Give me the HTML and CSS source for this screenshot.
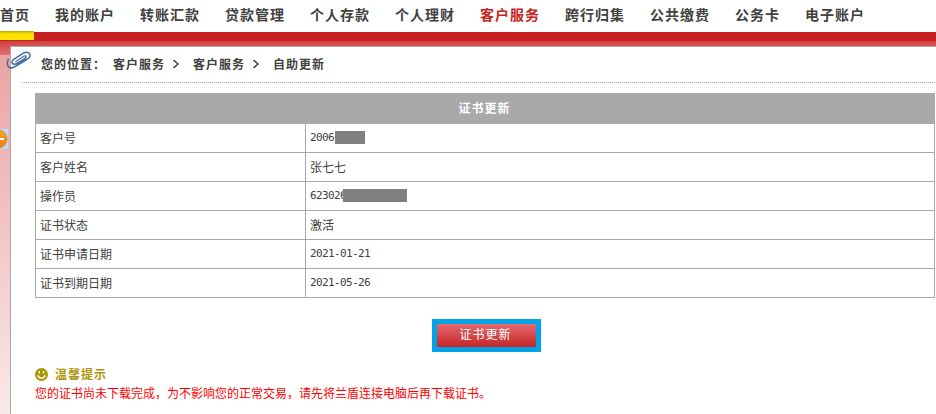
FILE: index.html
```html
<!DOCTYPE html>
<html lang="zh-CN">
<head>
<meta charset="utf-8">
<title>证书更新</title>
<link rel="stylesheet" href="styles.css">
</head>
<body>
<div class="page">
  <nav class="nav">
    <a>首页</a><a>我的账户</a><a>转账汇款</a><a>贷款管理</a><a>个人存款</a><a>个人理财</a><a class="active">客户服务</a><a>跨行归集</a><a>公共缴费</a><a>公务卡</a><a>电子账户</a>
  </nav>
  <div class="band"><div class="marker"></div></div>
  <div class="body">
    <div class="glow"></div>
    <svg class="toggle" width="8" height="20" viewBox="0 0 8 20">
      <defs><linearGradient id="orange" x1="0" y1="0" x2="0" y2="1"><stop offset="0" stop-color="#ffa428"/><stop offset="1" stop-color="#ee7d0c"/></linearGradient></defs>
      <rect width="8" height="20" fill="#b9dcf2"/>
      <circle cx="-2" cy="10" r="9" fill="url(#orange)" stroke="#c88c46"/>
      <rect y="9" width="4" height="2" fill="#fff"/>
    </svg>
    <svg class="clip" width="26" height="20" viewBox="0 0 26 20" fill="none" stroke="#3f6c9f" stroke-width="1.5" stroke-linecap="round" stroke-linejoin="round">
      <path d="M2.300 8.500C.8 11 1 15.200 3.200 16.300C5 17.300 7.200 16.800 9 15.700L21.500 8C24.500 6 24.600 3.500 23.200 2.200C21.600.9 19 1.200 17 2.400L8.500 7.800C6.200 9.300 5.400 11.200 6.500 12.500C7.600 13.800 9.800 13.300 11.800 12L19.200 7.300"/>
      <path d="M9.800 10.500L18.300 5.100C20 4.100 21.200 5.700 19.200 7.300" stroke-width="1.200"/>
    </svg>
    <main class="panel">
      <div class="crumbs">
        <span class="label">您的位置：</span><span>客户服务</span><svg width="8" height="10" viewBox="0 0 8 10"><path d="M1.500 1L6 5L1.500 9"/></svg><span>客户服务</span><svg width="8" height="10" viewBox="0 0 8 10"><path d="M1.500 1L6 5L1.500 9"/></svg><span>自助更新</span>
      </div>
      <table class="info">
        <colgroup><col class="names"><col></colgroup>
        <thead><tr><th colspan="2">证书更新</th></tr></thead>
        <tbody>
          <tr><td>客户号</td><td><div class="value num">2006<i class="mask short"></i></div></td></tr>
          <tr><td>客户姓名</td><td>张七七</td></tr>
          <tr><td>操作员</td><td><div class="value num">623026<i class="mask long"></i></div></td></tr>
          <tr><td>证书状态</td><td>激活</td></tr>
          <tr><td>证书申请日期</td><td><div class="num">2021-01-21</div></td></tr>
          <tr><td>证书到期日期</td><td><div class="num">2021-05-26</div></td></tr>
        </tbody>
      </table>
      <button class="update">证书更新</button>
      <section class="tips">
        <h2><svg width="13" height="13" viewBox="0 0 13 13"><circle cx="6.500" cy="6.500" r="6.500" fill="#ad9509"/><path d="M4.300 3V5.500M8.500 3V5.500" stroke="#fff" stroke-width="1.400"/><path d="M2.800 7.300C4 11 9 11 10.200 7.300" fill="none" stroke="#fff" stroke-width="1.200"/></svg>温馨提示</h2>
        <p>您的证书尚未下载完成，为不影响您的正常交易，请先将兰盾连接电脑后再下载证书。</p>
      </section>
    </main>
  </div>
</div>
</body>
</html>
```
FILE: styles.css
```css
* { box-sizing: border-box; }
body {
  margin: 0;
  background: #fff;
  color: #404040;
  font: 12px/18px "Noto Sans CJK SC", sans-serif;
}
.page {
  display: flex;
  flex-direction: column;
  height: 414px;
  overflow: hidden;
}
.nav {
  display: flex;
  gap: 25px;
  height: 32px;
  flex: none;
  font-size: 14px;
  font-weight: 700;
  letter-spacing: 1px;
  line-height: 29px;
  white-space: nowrap;
}
.nav .active { color: #c4241c; }
.band {
  height: 9px;
  flex: none;
  background: #c41e1e;
}
.marker {
  width: 34px;
  height: 9px;
  margin-top: -1px;
  background: linear-gradient(#b5a000, #f2d900 25%, #ffe400 50%, #ffe400);
}
.body {
  position: relative;
  flex: 1;
  padding: 5px 0 0 10px;
  background: linear-gradient(#eba3a3 14px, #f9e9e9);
}
.glow {
  position: absolute;
  inset: 0 0 auto;
  height: 14px;
  background: linear-gradient(#d04040, #e17171);
}
.toggle {
  position: absolute;
  left: 0;
  top: 88px;
}
.clip {
  position: absolute;
  z-index: 1;
  left: 6px;
  top: 10px;
}
.panel {
  position: relative;
  height: 100%;
  padding: 0 1px 0 24px;
  border: solid #a9a9a9;
  border-width: 1px 0 0 1px;
  background: #fff;
}
.crumbs {
  display: flex;
  align-items: center;
  height: 36px;
  margin-left: -13px;
  padding: 0 0 2px 19px;
  border-bottom: 1px dotted #a9a9a9;
  font-weight: 700;
  letter-spacing: 1px;
}
.crumbs .label { margin-right: 7px; }
.crumbs svg {
  margin: 0 13px 0 7px;
  fill: none;
  stroke: #404040;
  stroke-width: 1.5;
}
.info {
  width: 900px;
  margin-top: 10px;
  border-collapse: separate;
  border-spacing: 0;
  border-left: 1px solid #a9a9a9;
  table-layout: fixed;
}
.info .names { width: 270px; }
.info th {
  height: 31px;
  padding: 0 2px 2px 0;
  background: #a9a9a9;
  color: #fff;
  letter-spacing: 1px;
}
.info td {
  height: 29px;
  padding: 0 4px;
  border: solid #a9a9a9;
  border-width: 0 1px 1px 0;
}
.num {
  font-family: "DejaVu Sans Mono", monospace;
  font-size: 11px;
  letter-spacing: -0.62px;
}
.value { position: relative; }
.mask {
  position: absolute;
  top: 2px;
  height: 13px;
  background: #808080;
}
.short { left: 25px; width: 30px; }
.long { left: 33px; width: 64px; }
.update {
  display: block;
  width: 109px;
  height: 33px;
  margin: 21px 0 0 397px;
  padding: 0 2px 3px 0;
  border: 5px solid #00a2e8;
  background: linear-gradient(#e16a70, #c62525) padding-box;
  color: #fff;
  font: inherit;
  letter-spacing: 1px;
}
.tips h2 {
  display: flex;
  align-items: center;
  gap: 7px;
  margin: 13px 0 0;
  color: #ad9509;
  font-size: 12px;
  letter-spacing: 1px;
}
.tips p {
  margin: 1px 0 0;
  color: #f00;
}
```
